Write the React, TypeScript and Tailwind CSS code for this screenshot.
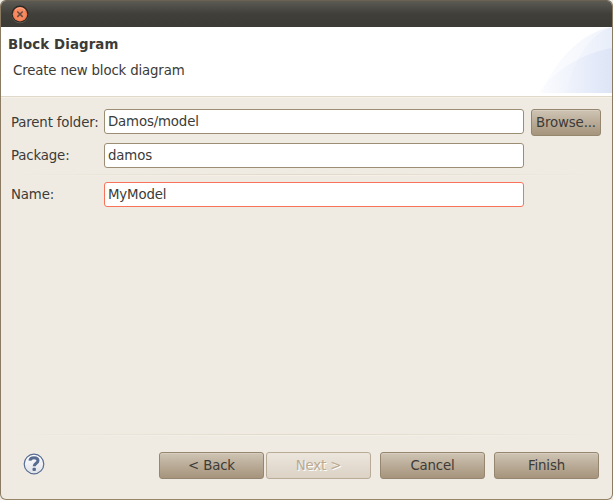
import type { ReactNode } from "react";

function Field({ label, value, invalid = false, labelClass = "" }: { label: string; value: string; invalid?: boolean; labelClass?: string }) {
  return (
    <div className="flex h-[25px] items-center">
      <label className={`w-[94px] shrink-0 pl-px leading-[25px] whitespace-nowrap ${labelClass}`}>{label}</label>
      <div
        className={`h-[25px] w-[420px] rounded-[3px] border bg-white pl-[3px] leading-[23px] ${invalid ? "border-[#f8735a]" : "border-[#9c8e75]"}`}
      >
        {value}
      </div>
    </div>
  );
}

function PushButton({ children, disabled = false, wide = true }: { children: ReactNode; disabled?: boolean; wide?: boolean }) {
  const size = wide ? "w-[105px]" : "w-[70px]";
  const look = disabled
    ? "border-[#b8ab98] bg-linear-to-b from-[#ece6dd] to-[#dcd2c5] text-[#bba98e] [text-shadow:1px_1px_0_#ffffff]"
    : "border-[#94866f] bg-linear-to-b from-[#cfc4b4] via-[#b9ab97] to-[#a6947c] shadow-[inset_0_1px_0_#d8cebf]";
  return (
    <button
      disabled={disabled}
      className={`flex h-[27px] shrink-0 items-center justify-center rounded-[3px] border leading-[25px] whitespace-nowrap ${size} ${look}`}
    >
      {children}
    </button>
  );
}

function Separator() {
  return (
    <div className="h-[2px]">
      <div className="h-px bg-linear-to-r from-transparent via-[#e0d9c9] to-transparent" />
      <div className="h-px bg-linear-to-r from-transparent via-[#f6f2ea] to-transparent" />
    </div>
  );
}

function HelpIcon() {
  return (
    <svg width="22" height="22" viewBox="0 0 22 22" fill="none">
      <defs>
        <linearGradient id="help" x1="0" y1="0" x2="0" y2="1">
          <stop offset="0" stopColor="#ffffff" />
          <stop offset="1" stopColor="#dfe2e8" />
        </linearGradient>
      </defs>
      <circle cx="11" cy="11" r="9.8" fill="url(#help)" stroke="#586c92" strokeWidth="1.2" />
      <path d="M6.9 7.6C7.1 5.5 8.6 4.7 11 4.7C13.6 4.7 15 5.9 15 7.7C15 10.3 11.2 10.2 11.2 13.3" stroke="#586c92" strokeWidth="3" />
      <rect x="9.5" y="14.7" width="3.4" height="3.2" rx="1" fill="#586c92" />
    </svg>
  );
}

function CloseIcon() {
  return (
    <svg width="18" height="19" viewBox="0 0 18 19" fill="none">
      <defs>
        <radialGradient id="close" cx="0.5" cy="0.5" r="0.55">
          <stop offset="0" stopColor="#f08a64" />
          <stop offset="0.65" stopColor="#f98a60" />
          <stop offset="1" stopColor="#ee6c40" />
        </radialGradient>
      </defs>
      <circle cx="9" cy="9.8" r="8.4" fill="#66645e" />
      <circle cx="9" cy="9" r="8.5" fill="#2c2a26" />
      <circle cx="9" cy="9.2" r="7.2" fill="url(#close)" />
      <path d="M4 5.3A6.3 6.3 0 0 1 14 5.3" stroke="#ffb698" strokeWidth="1" />
      <path d="M6.3 6.5L11.7 11.9M11.7 6.5L6.3 11.9" stroke="#6a4a3e" strokeWidth="1.5" />
    </svg>
  );
}

function BannerArt() {
  return (
    <svg width="74" height="66" viewBox="0 0 74 66">
      <defs>
        <linearGradient id="sweep" x1="0" x2="1">
          <stop offset="0" stopColor="#dae2f6" stopOpacity="0.08" />
          <stop offset="1" stopColor="#d3def5" stopOpacity="0.35" />
        </linearGradient>
        <linearGradient id="base" x1="0" x2="1">
          <stop offset="0" stopColor="#dce4f7" stopOpacity="0.05" />
          <stop offset="1" stopColor="#cfd9f3" stopOpacity="0.55" />
        </linearGradient>
      </defs>
      <path d="M3 66C16 36 42 5 74 0V66Z" fill="url(#sweep)" />
      <path d="M28 66C35 35 51 7 74 0V66Z" fill="url(#sweep)" opacity="0.8" />
      <path d="M0 66C18 42 45 26 74 21V66Z" fill="url(#base)" opacity="0.8" />
    </svg>
  );
}

export default function App() {
  return (
    <div className="h-[500px] w-[613px] bg-[#efebe3] font-['DejaVu_Sans',sans-serif] text-[13.33px] tracking-[-0.16px] text-[#3c3b37]">
      <div className="flex h-full flex-col overflow-hidden rounded-[6px] border border-t-[#6a6353] border-r-[#8b7b62] border-b-[#958468] border-l-[#8b7b62] bg-[#efebe3]">
        <div className="flex h-[26px] shrink-0 bg-linear-to-b from-[#5c5a53] via-[#403f3a] via-50% to-[#3b3a35] pt-[4px] pl-[10px]">
          <CloseIcon />
        </div>

        <header className="flex h-[69px] shrink-0 justify-between bg-white">
          <div className="pl-[7px]">
            <h1 className="mt-[8px] leading-5 font-bold tracking-[0.12px]">Block Diagram</h1>
            <p className="mt-[6px] ml-[5px] leading-5">Create new block diagram</p>
          </div>
          <BannerArt />
        </header>
        <div className="h-px shrink-0 bg-[#e0d8c8]" />
        <div className="h-px shrink-0 bg-[#f5f1e9]" />

        <main className="h-[336px] shrink-0 px-[9px] pt-[11px]">
          <div className="flex gap-[7px]">
            <Field label="Parent folder:" value="Damos/model" labelClass="pt-[2px]" />
            <PushButton wide={false}>Browse...</PushButton>
          </div>
          <div className="mt-[7px]">
            <Field label="Package:" value="damos" />
          </div>
          <div className="mt-[6px] mb-[6px]">
            <Separator />
          </div>
          <Field label="Name:" value="MyModel" invalid />
        </main>
        <Separator />

        <footer className="flex pt-[16px] pr-[13px] pl-[22px]">
          <div className="mt-px">
            <HelpIcon />
          </div>
          <div className="ml-auto flex gap-[9px]">
            <div className="flex gap-[2px]">
              <PushButton>&lt; Back</PushButton>
              <PushButton disabled>Next &gt;</PushButton>
            </div>
            <PushButton>Cancel</PushButton>
            <PushButton>Finish</PushButton>
          </div>
        </footer>
      </div>
    </div>
  );
}
